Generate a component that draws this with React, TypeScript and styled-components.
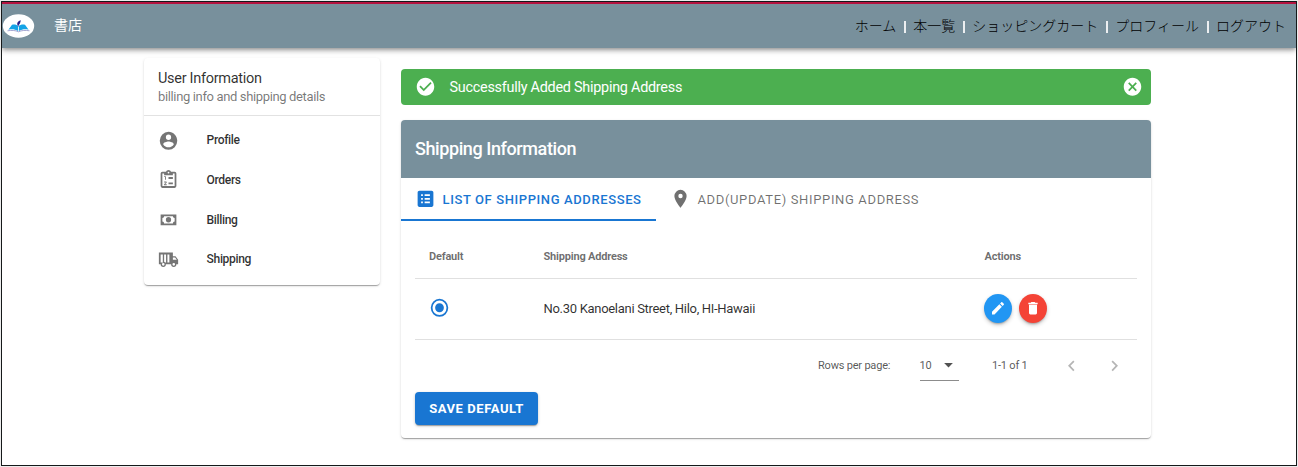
import React from "react";
import styled, { createGlobalStyle, css } from "styled-components";

const GlobalStyle = createGlobalStyle`
  * { box-sizing: border-box; }
  body {
    margin: 0;
    background: #ececec;
    font-family: Roboto, "Noto Sans CJK JP", sans-serif;
    color: rgba(0, 0, 0, 0.82);
  }
`;

const raised = css`
  box-shadow: 0 2px 1px -1px rgba(0, 0, 0, 0.2), 0 1px 1px rgba(0, 0, 0, 0.14),
    0 1px 3px rgba(0, 0, 0, 0.12);
`;

const Frame = styled.div`
  width: 1296px;
  height: 465px;
  margin: 1px;
  border: 1px solid #16191a;
  background: #fff;
  overflow: hidden;
`;

const Header = styled.header`
  display: flex;
  align-items: center;
  height: 46px;
  padding-right: 10px;
  border-top: 2px solid #b5123f;
  background: #78909c;
  box-shadow: 0 2px 4px -1px rgba(0, 0, 0, 0.28), 0 3px 5px rgba(0, 0, 0, 0.16),
    0 1px 8px rgba(0, 0, 0, 0.12);
`;

const Brand = styled.div`
  flex: 1;
  display: flex;
  align-items: center;
  gap: 19px;
  color: #fff;
  font-size: 14px;
  line-height: 20px;
`;

const BrandName = styled.span`
  padding-bottom: 2px;
`;

const Nav = styled.nav`
  display: flex;
  align-items: center;
  gap: 7.5px;
  padding-bottom: 2px;
  font-family: "Noto Sans CJK JP", sans-serif;
  font-weight: 300;
  font-size: 14px;
  line-height: 20px;
  color: #000;
`;

const NavDivider = styled.span`
  width: 2px;
  height: 12px;
  margin-top: 4px;
  background: #eceff1;
`;

const Body = styled.div`
  display: flex;
  align-items: flex-start;
  gap: 21px;
  padding: 10px 0 0 142px;
`;

const Sidebar = styled.aside`
  width: 236px;
  height: 227px;
  border-radius: 4px;
  background: #fff;
  ${raised}
`;

const SidebarHead = styled.div`
  height: 57.5px;
  padding: 11px 14px 0;
  border-bottom: 1px solid #e2e2e2;
`;

const SidebarTitle = styled.div`
  font-size: 14.5px;
  line-height: 19px;
  letter-spacing: -0.3px;
`;

const SidebarSubtitle = styled.div`
  font-size: 13px;
  line-height: 17px;
  letter-spacing: -0.36px;
  color: rgba(0, 0, 0, 0.54);
`;

const Menu = styled.div`
  padding-top: 5px;
`;

const MenuItem = styled.div`
  display: flex;
  align-items: center;
  gap: 27.6px;
  height: 39.7px;
  padding-left: 14px;
  font-size: 12.1px;
  font-weight: 500;
  letter-spacing: -0.37px;
`;

const Main = styled.main`
  width: 750px;
  padding-top: 11px;
`;

const Alert = styled.div`
  display: flex;
  align-items: center;
  height: 36px;
  padding: 0 8px 0 14px;
  border-radius: 4px;
  background: #4caf50;
  color: #fff;
  font-size: 14.4px;
  letter-spacing: -0.25px;
`;

const AlertText = styled.span`
  flex: 1;
  padding: 1px 0 0 13.5px;
`;

const Card = styled.section`
  height: 318px;
  margin-top: 15px;
  border-radius: 4px;
  background: #fff;
  ${raised}
`;

const CardTitle = styled.h1`
  display: flex;
  align-items: center;
  height: 58px;
  margin: 0;
  padding: 0 14px 1px;
  border-radius: 4px 4px 0 0;
  background: #78909c;
  color: #fff;
  font-size: 18px;
  font-weight: 500;
  letter-spacing: -0.41px;
`;

const Tabs = styled.div`
  display: flex;
  height: 43px;
`;

const Tab = styled.div<{ $active?: boolean }>`
  display: flex;
  align-items: center;
  gap: 7px;
  width: ${(p) => (p.$active ? "255px" : "auto")};
  padding: 1px 14px 0 13.5px;
  border-bottom: 2px solid ${(p) => (p.$active ? "#1976d2" : "transparent")};
  color: ${(p) => (p.$active ? "#1976d2" : "rgba(0, 0, 0, 0.56)")};
  font-size: 13px;
  font-weight: ${(p) => (p.$active ? 500 : 400)};
  letter-spacing: ${(p) => (p.$active ? "0.61px" : "0.64px")};
  white-space: nowrap;
`;

const TabLabel = styled.span`
  padding-top: 1px;
`;

const CardBody = styled.div`
  padding: 14px 14px 0;
`;

const Row = styled.div<{ $head?: boolean }>`
  display: grid;
  grid-template-columns: 114.5px 441px 1fr;
  align-items: center;
  height: ${(p) => (p.$head ? "44px" : "61px")};
  padding: 0 0 ${(p) => (p.$head ? "0" : "2px")} 14px;
  border-bottom: 1px solid #e0e0e0;
  font-size: ${(p) => (p.$head ? "11px" : "13px")};
  font-weight: ${(p) => (p.$head ? 700 : 400)};
  letter-spacing: ${(p) => (p.$head ? "-0.2px" : "-0.3px")};
  color: ${(p) => (p.$head ? "rgba(0, 0, 0, 0.58)" : "rgba(0, 0, 0, 0.82)")};
`;

const RadioMark = styled.span`
  margin-left: -0.5px;
  color: #1976d2;
`;

const Actions = styled.div`
  display: flex;
  gap: 7px;
  margin-left: -0.5px;
`;

const RoundButton = styled.button<{ $color: string }>`
  display: flex;
  align-items: center;
  justify-content: center;
  width: 28px;
  height: 29px;
  padding: 0;
  border: 0;
  border-radius: 50%;
  background: ${(p) => p.$color};
  color: #fff;
  box-shadow: 0 2px 2px -1px rgba(0, 0, 0, 0.25), 0 2px 4px rgba(0, 0, 0, 0.2);
`;

const Pager = styled.div`
  display: flex;
  align-items: center;
  height: 51.5px;
  padding-left: 403px;
  font-size: 11px;
  letter-spacing: -0.2px;
  color: rgba(0, 0, 0, 0.68);
  white-space: nowrap;
`;

const PagerLabel = styled.span`
  width: 101.5px;
`;

const PageSize = styled.div`
  display: flex;
  align-items: center;
  justify-content: space-between;
  width: 39.5px;
  height: 31px;
  border-bottom: 1px solid #8c8c8c;
`;

const PageRange = styled.span`
  width: 68.5px;
  margin-left: 33px;
`;

const PagerArrows = styled.div`
  display: flex;
  gap: 22.5px;
  color: #b5b5b5;
`;

const SaveButton = styled.button`
  width: 123px;
  height: 33px;
  padding: 0;
  border: 0;
  border-radius: 4px;
  background: #1976d2;
  color: #fff;
  font-family: inherit;
  font-size: 13px;
  font-weight: 700;
  letter-spacing: 0.57px;
  white-space: nowrap;
  box-shadow: 0 2px 1px -1px rgba(0, 0, 0, 0.25), 0 1px 3px rgba(0, 0, 0, 0.24);
`;

const IconSvg = styled.svg`
  display: block;
  flex: none;
  fill: currentColor;
  fill-rule: evenodd;
`;

const MenuIcon = styled.span`
  display: flex;
  color: #757575;
`;

function Icon({ d, w = 21, h = 21.6 }: { d: string; w?: number; h?: number }) {
  return (
    <IconSvg width={w} height={h} viewBox="0 0 24 24" preserveAspectRatio="none">
      <path d={d} />
    </IconSvg>
  );
}

const icons = {
  account:
    "M12,19.2C9.5,19.2 7.29,17.92 6,16C6.03,14 10,12.9 12,12.9C14,12.9 17.97,14 18,16C16.71,17.92 14.5,19.2 12,19.2M12,5A3,3 0 0,1 15,8A3,3 0 0,1 12,11A3,3 0 0,1 9,8A3,3 0 0,1 12,5M12,2A10,10 0 0,0 2,12A10,10 0 0,0 12,22A10,10 0 0,0 22,12C22,6.47 17.5,2 12,2Z",
  orders:
    "M19,3H14.82C14.4,1.84 13.3,1 12,1C10.7,1 9.6,1.84 9.18,3H5A2,2 0 0,0 3,5V19A2,2 0 0,0 5,21H19A2,2 0 0,0 21,19V5A2,2 0 0,0 19,3M12,3A1,1 0 0,1 13,4A1,1 0 0,1 12,5A1,1 0 0,1 11,4A1,1 0 0,1 12,3M5,5H7V7H17V5H19V19H5ZM12,9H17V11H12ZM12,15H17V17H12ZM8,12V9H7V8H9V12ZM9.25,14A0.75,0.75 0 0,1 10,14.75C10,14.95 9.92,15.14 9.79,15.27L8.12,17H10V18H7V17.08L9,15H7V14Z",
  cash: "M3,6H21V18H3ZM12,9A3,3 0 0,1 15,12A3,3 0 0,1 12,15A3,3 0 0,1 9,12A3,3 0 0,1 12,9ZM7,8A2,2 0 0,1 5,10V14A2,2 0 0,1 7,16H17A2,2 0 0,1 19,14V10A2,2 0 0,1 17,8Z",
  truck:
    "M1,4V17H3A3,3 0 0,0 6,20A3,3 0 0,0 9,17H15A3,3 0 0,0 18,20A3,3 0 0,0 21,17H23V12L20,8H17V4ZM3,6H5.5V15.2A3,3 0 0,0 3.8,15H3ZM7,6H9.2V15H8.2L7,14.2ZM10.8,6H13V15H10.8ZM17,9.5H19.5L21.47,12H17ZM6,15.5A1.5,1.5 0 0,1 7.5,17A1.5,1.5 0 0,1 6,18.5A1.5,1.5 0 0,1 4.5,17A1.5,1.5 0 0,1 6,15.5ZM18,15.5A1.5,1.5 0 0,1 19.5,17A1.5,1.5 0 0,1 18,18.5A1.5,1.5 0 0,1 16.5,17A1.5,1.5 0 0,1 18,15.5Z",
  check:
    "M12 2C6.5 2 2 6.5 2 12S6.5 22 12 22 22 17.5 22 12 17.5 2 12 2M10 17L5 12L6.41 10.59L10 14.17L17.59 6.58L19 8L10 17Z",
  close:
    "M12,2C17.53,2 22,6.47 22,12C22,17.53 17.53,22 12,22C6.47,22 2,17.53 2,12C2,6.47 6.47,2 12,2M15.59,7L12,10.59L8.41,7L7,8.41L10.59,12L7,15.59L8.41,17L12,13.41L15.59,17L17,15.59L13.41,12L17,8.41L15.59,7Z",
  list: "M19 3H5C3.9 3 3 3.9 3 5V19C3 20.1 3.9 21 5 21H19C20.1 21 21 20.1 21 19V5C21 3.9 20.1 3 19 3M7 7H9V9H7V7M7 11H9V13H7V11M7 15H9V17H7V15M17 17H11V15H17V17M17 13H11V11H17V13M17 9H11V7H17V9Z",
  marker:
    "M12,11.5A2.5,2.5 0 0,1 9.5,9A2.5,2.5 0 0,1 12,6.5A2.5,2.5 0 0,1 14.5,9A2.5,2.5 0 0,1 12,11.5M12,2A7,7 0 0,0 5,9C5,14.25 12,22 12,22C12,22 19,14.25 19,9A7,7 0 0,0 12,2Z",
  radio:
    "M12,20A8,8 0 0,1 4,12A8,8 0 0,1 12,4A8,8 0 0,1 20,12A8,8 0 0,1 12,20M12,2A10,10 0 0,0 2,12A10,10 0 0,0 12,22A10,10 0 0,0 22,12A10,10 0 0,0 12,2M12,7A5,5 0 0,0 7,12A5,5 0 0,0 12,17A5,5 0 0,0 17,12A5,5 0 0,0 12,7Z",
  pencil:
    "M20.71,7.04C21.1,6.65 21.1,6 20.71,5.63L18.37,3.29C18,2.9 17.35,2.9 16.96,3.29L15.12,5.12L18.87,8.87M3,17.25V21H6.75L17.81,9.93L14.06,6.18L3,17.25Z",
  trash: "M19,4H15.5L14.5,3H9.5L8.5,4H5V6H19M6,19A2,2 0 0,0 8,21H16A2,2 0 0,0 18,19V7H6V19Z",
  down: "M7,10L12,15L17,10H7Z",
  left: "M15.41,16.58L10.83,12L15.41,7.41L14,6L8,12L14,18L15.41,16.58Z",
  right: "M8.59,16.58L13.17,12L8.59,7.41L10,6L16,12L10,18L8.59,16.58Z",
};

function Logo() {
  return (
    <svg width="33" height="24" viewBox="0 0 33 24">
      <ellipse cx="16.5" cy="12" rx="15.7" ry="11.8" fill="#fff" />
      <path d="M6.4 15.8L10 10.8C12.4 10.1 14.6 10.6 16.1 12V17C13 15.2 9.5 15 6.4 15.8Z" fill="#14a3e6" />
      <path d="M26.6 15.8L23 10.8C20.6 10.1 18.4 10.6 16.9 12V17C20 15.2 23.5 15 26.6 15.8Z" fill="#14a3e6" />
      <path d="M5.5 16.8C9.5 16.1 13.5 16.3 16.5 17.8C19.5 16.3 23.5 16.1 27.5 16.8" fill="none" stroke="#7c80bf" strokeWidth="0.7" />
      <path d="M15.2 9.6C15.4 8 16.8 6.8 18.8 6.2C18.4 8.4 17.8 10 16.6 11.2V13L15.4 11Z" fill="#28208a" />
    </svg>
  );
}

const navItems = ["ホーム", "本一覧", "ショッピングカート", "プロフィール", "ログアウト"];

const menuItems = [
  { label: "Profile", icon: icons.account },
  { label: "Orders", icon: icons.orders },
  { label: "Billing", icon: icons.cash },
  { label: "Shipping", icon: icons.truck },
];

export default function App() {
  return (
    <>
      <GlobalStyle />
      <Frame>
        <Header>
          <Brand>
            <Logo />
            <BrandName>書店</BrandName>
          </Brand>
          <Nav>
            {navItems.map((item, i) => (
              <React.Fragment key={item}>
                {i > 0 && <NavDivider />}
                <span>{item}</span>
              </React.Fragment>
            ))}
          </Nav>
        </Header>
        <Body>
          <Sidebar>
            <SidebarHead>
              <SidebarTitle>User Information</SidebarTitle>
              <SidebarSubtitle>billing info and shipping details</SidebarSubtitle>
            </SidebarHead>
            <Menu>
              {menuItems.map((item) => (
                <MenuItem key={item.label}>
                  <MenuIcon>
                    <Icon d={item.icon} />
                  </MenuIcon>
                  <span>{item.label}</span>
                </MenuItem>
              ))}
            </Menu>
          </Sidebar>
          <Main>
            <Alert>
              <Icon d={icons.check} />
              <AlertText>Successfully Added Shipping Address</AlertText>
              <Icon d={icons.close} />
            </Alert>
            <Card>
              <CardTitle>Shipping Information</CardTitle>
              <Tabs>
                <Tab $active>
                  <Icon d={icons.list} />
                  <TabLabel>LIST OF SHIPPING ADDRESSES</TabLabel>
                </Tab>
                <Tab>
                  <Icon d={icons.marker} />
                  <TabLabel>ADD(UPDATE) SHIPPING ADDRESS</TabLabel>
                </Tab>
              </Tabs>
              <CardBody>
                <Row $head>
                  <span>Default</span>
                  <span>Shipping Address</span>
                  <span>Actions</span>
                </Row>
                <Row>
                  <RadioMark>
                    <Icon d={icons.radio} />
                  </RadioMark>
                  <span>No.30 Kanoelani Street, Hilo, HI-Hawaii</span>
                  <Actions>
                    <RoundButton $color="#2196f3">
                      <Icon d={icons.pencil} w={16} h={16.5} />
                    </RoundButton>
                    <RoundButton $color="#f44336">
                      <Icon d={icons.trash} w={16} h={16.5} />
                    </RoundButton>
                  </Actions>
                </Row>
                <Pager>
                  <PagerLabel>Rows per page:</PagerLabel>
                  <PageSize>
                    <span>10</span>
                    <Icon d={icons.down} />
                  </PageSize>
                  <PageRange>1-1 of 1</PageRange>
                  <PagerArrows>
                    <Icon d={icons.left} />
                    <Icon d={icons.right} />
                  </PagerArrows>
                </Pager>
                <SaveButton>SAVE DEFAULT</SaveButton>
              </CardBody>
            </Card>
          </Main>
        </Body>
      </Frame>
    </>
  );
}
